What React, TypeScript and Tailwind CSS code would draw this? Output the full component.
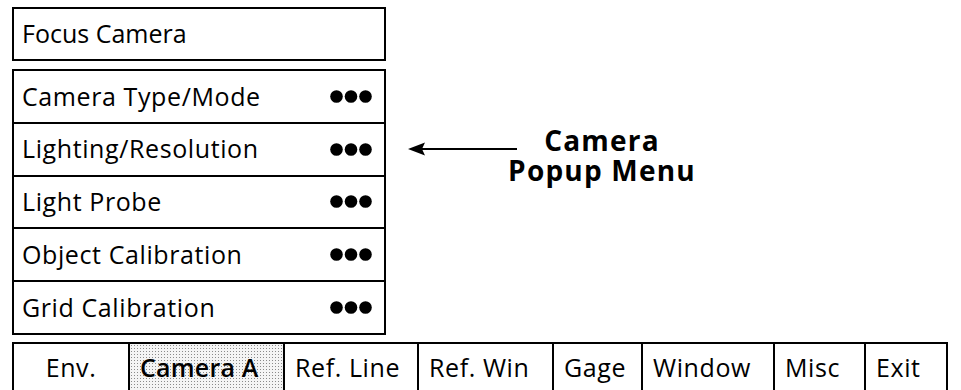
import React from "react";

const rows = [
  "Camera Type/Mode",
  "Lighting/Resolution",
  "Light Probe",
  "Object Calibration",
  "Grid Calibration",
];

const tabs: { label: string; w: string; center?: boolean; active?: boolean }[] = [
  { label: "Env.", w: "w-[116px]", center: true },
  { label: "Camera A", w: "w-[155px]", active: true },
  { label: "Ref. Line", w: "w-[134px]" },
  { label: "Ref. Win", w: "w-[135px]" },
  { label: "Gage", w: "w-[89px]" },
  { label: "Window", w: "w-[132px]" },
  { label: "Misc", w: "w-[91px]" },
  { label: "Exit", w: "flex-1" },
];

function Dots() {
  return (
    <svg width="42" height="13" viewBox="0 0 42 13">
      <circle cx="6.5" cy="6.5" r="6.3" fill="#000" />
      <circle cx="21" cy="6.5" r="6.3" fill="#000" />
      <circle cx="35.5" cy="6.5" r="6.3" fill="#000" />
    </svg>
  );
}

export default function App() {
  return (
    <div
      className="w-[961px] h-[390px] bg-white overflow-hidden pt-[7px] pl-[12px] text-black"
      style={{ fontFamily: '"Open Sans", "Noto Sans", sans-serif' }}
    >
      <div className="flex">
        <div className="w-[374px] flex flex-col">
          <div className="h-[54px] border-2 border-black flex items-center pl-[8px] text-[25px] font-medium">
            Focus Camera
          </div>
          <div className="mt-[8px] h-[266px] border-2 border-black flex flex-col">
            {rows.map((r, i) => (
              <div
                key={r}
                className={`flex-1 flex items-center justify-between pl-[8px] pr-[12px] text-[25px] font-medium tracking-[0.6px] ${
                  i > 0 ? "border-t-2 border-black" : ""
                }`}
              >
                <span>{r}</span>
                <Dots />
              </div>
            ))}
          </div>
        </div>
        <div className="flex items-start ml-[20px] mt-[133px]">
          <svg width="112" height="18" viewBox="0 0 112 18">
            <path d="M2 9 L19 2.5 L16 9 L19 15.5 Z" fill="#000" />
            <line x1="14" y1="9" x2="111" y2="9" stroke="#000" strokeWidth="2" />
          </svg>
          <div className="-ml-[16px] -mt-[15px] w-[200px] flex flex-col items-center text-[28px] font-bold leading-[30px] tracking-[1.2px]">
            <div>Camera</div>
            <div>Popup Menu</div>
          </div>
        </div>
      </div>
      <div className="mt-[7px] w-[936px] h-[52px] border-2 border-black flex">
        {tabs.map((t, i) => (
          <div
            key={t.label}
            className={`${t.w} h-full flex items-center text-[25px] ${
              t.center ? "justify-center" : "pl-[10px]"
            } ${i < tabs.length - 1 ? "border-r-2 border-black" : ""} ${
              t.active
                ? "font-semibold tracking-[0.2px] bg-[radial-gradient(circle,#8a8a8a_0.7px,transparent_1px)] bg-[length:3px_3px] bg-[#f4f4f4]"
                : "font-medium tracking-[0.6px]"
            }`}
          >
            {t.label}
          </div>
        ))}
      </div>
    </div>
  );
}
